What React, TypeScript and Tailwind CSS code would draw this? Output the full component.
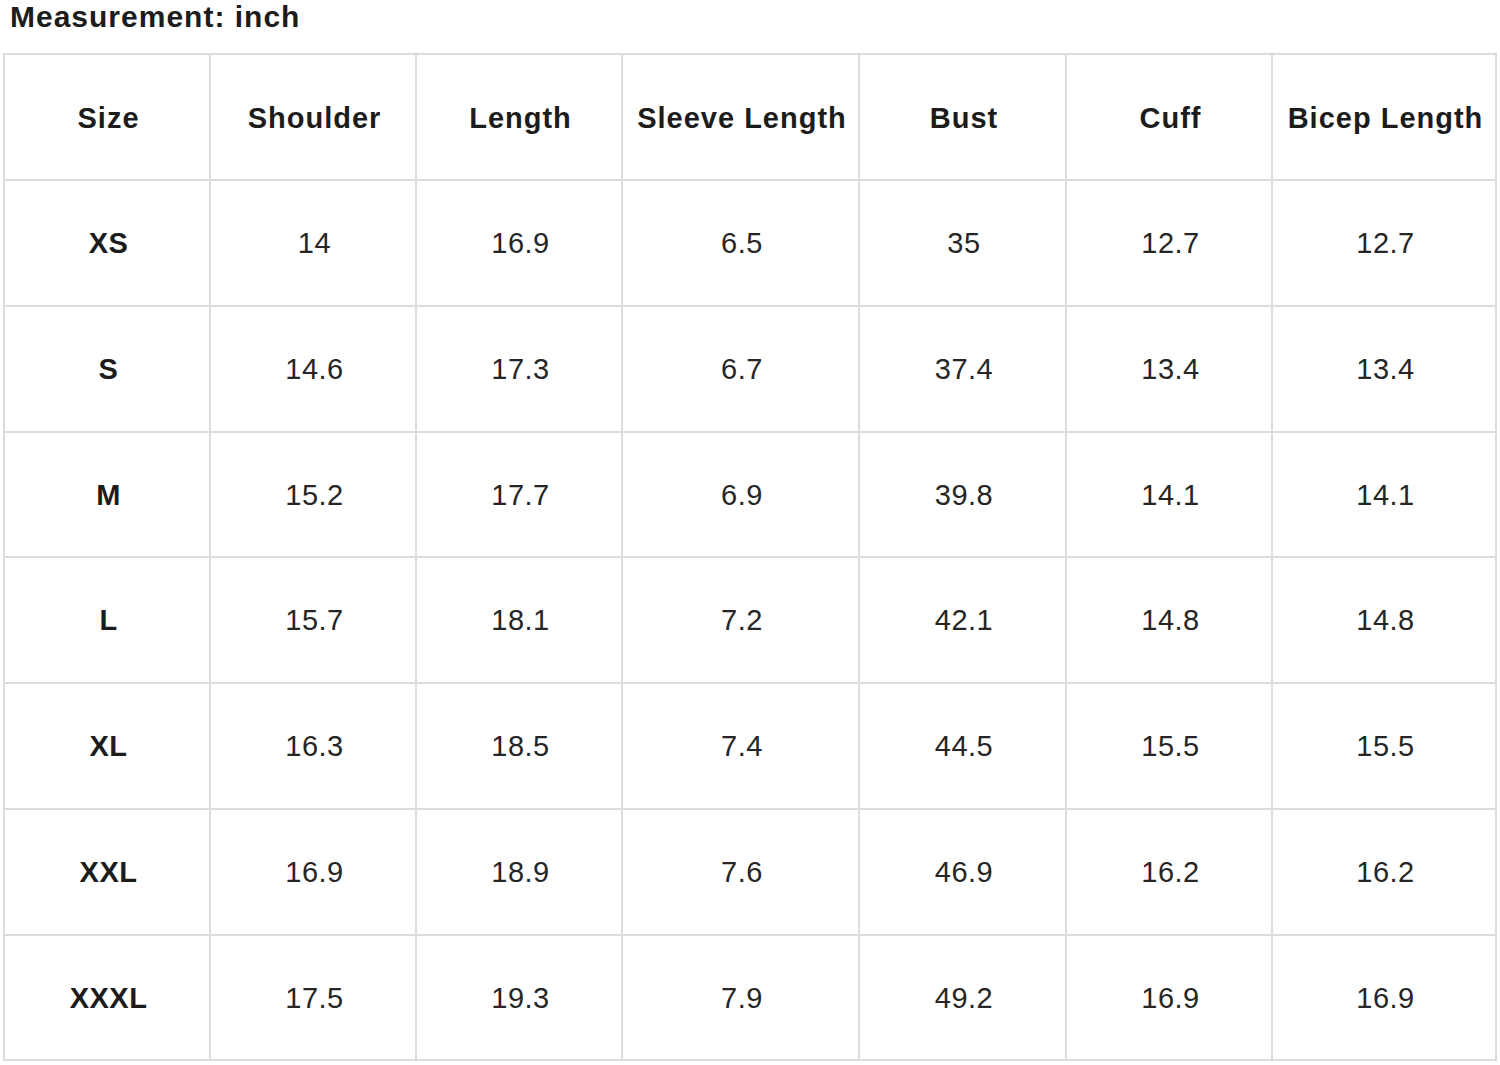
const headers = ['Size', 'Shoulder', 'Length', 'Sleeve Length', 'Bust', 'Cuff', 'Bicep Length'];

const rows = [
  ['XS', '14', '16.9', '6.5', '35', '12.7', '12.7'],
  ['S', '14.6', '17.3', '6.7', '37.4', '13.4', '13.4'],
  ['M', '15.2', '17.7', '6.9', '39.8', '14.1', '14.1'],
  ['L', '15.7', '18.1', '7.2', '42.1', '14.8', '14.8'],
  ['XL', '16.3', '18.5', '7.4', '44.5', '15.5', '15.5'],
  ['XXL', '16.9', '18.9', '7.6', '46.9', '16.2', '16.2'],
  ['XXXL', '17.5', '19.3', '7.9', '49.2', '16.9', '16.9'],
];

export default function App() {
  return (
    <div className="w-[1500px] h-[1065px] bg-white overflow-hidden" style={{ fontFamily: '"Liberation Sans", Arial, sans-serif' }}>
      {/* Title */}
      <div className="h-[53px] pl-[10px] pt-[2px]">
        <h1 className="text-[30px] leading-[30px] font-bold tracking-[1px] text-[#1c1c1c]">Measurement: inch</h1>
      </div>

      {/* Size table */}
      <div className="ml-[3px] w-[1494px] border-l-2 border-t-2 border-[#dcdcdc] grid grid-cols-[206px_206px_206px_237px_207px_206px_224px] grid-rows-[126px_126px_126px_125px_126px_126px_126px_125px]">
        {headers.map((h) => (
          <div key={h} className="flex items-center justify-center pl-[3px] pt-[3px] border-r-2 border-b-2 border-[#dcdcdc] text-[29px] font-bold tracking-[1px] text-[#1c1c1c]">
            {h}
          </div>
        ))}
        {rows.map((row) =>
          row.map((cell, i) => (
            <div
              key={row[0] + i}
              className={
                i === 0
                  ? 'flex items-center justify-center pl-[3px] pt-[2px] border-r-2 border-b-2 border-[#dcdcdc] text-[29px] font-bold tracking-[0.5px] text-[#1c1c1c]'
                  : 'flex items-center justify-center pl-[3px] pt-[2px] border-r-2 border-b-2 border-[#dcdcdc] text-[29px] tracking-[0.5px] text-[#262626]'
              }
            >
              {cell}
            </div>
          ))
        )}
      </div>
    </div>
  );
}
